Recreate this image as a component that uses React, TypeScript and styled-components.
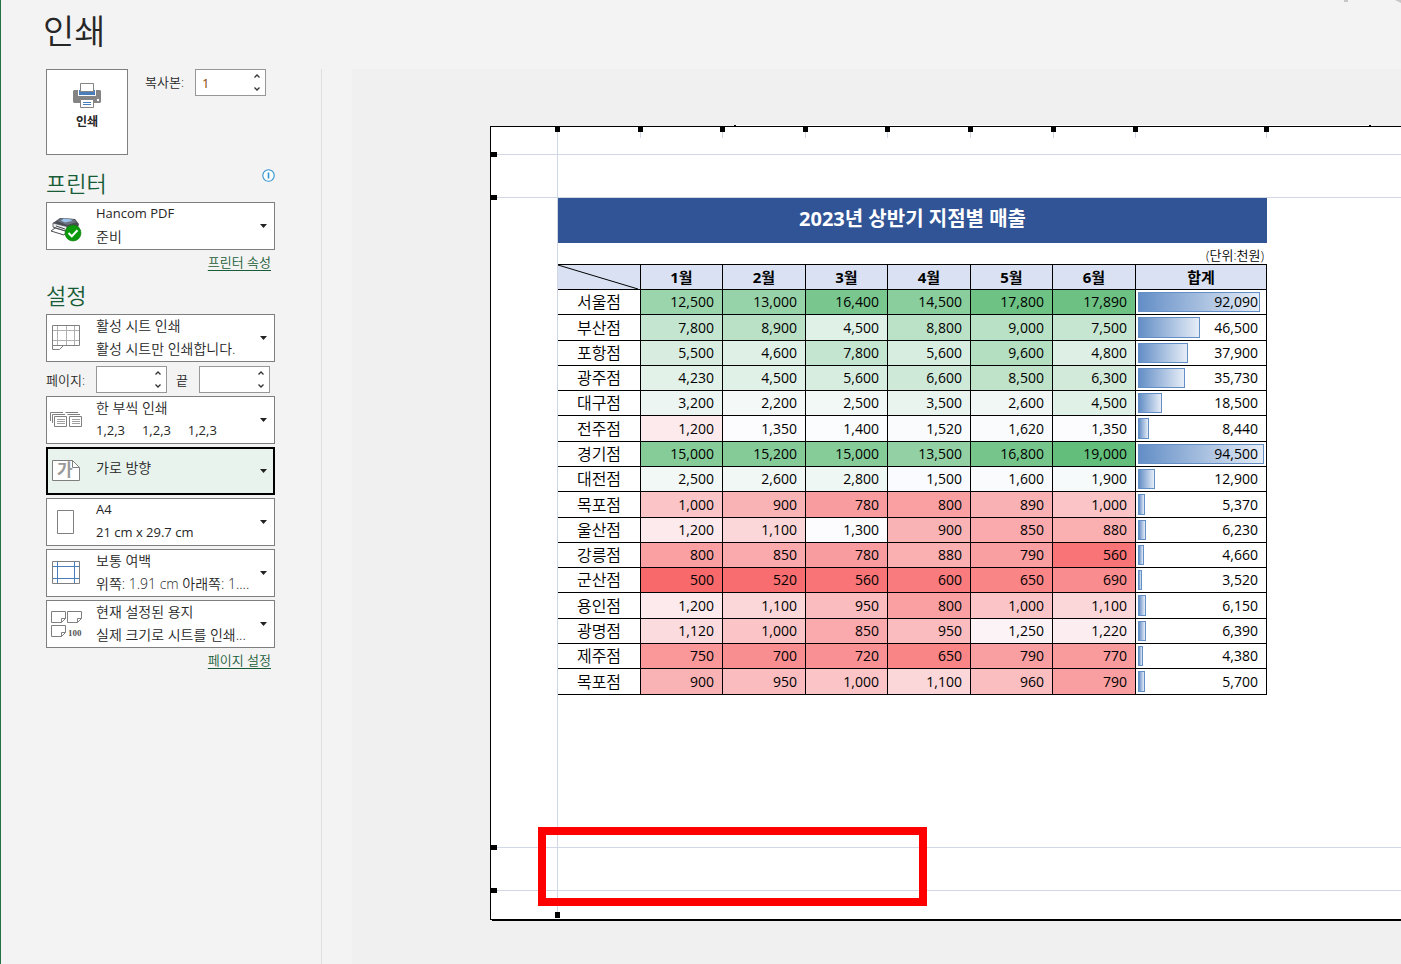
import React from "react";
import styled, { createGlobalStyle } from "styled-components";

const GlobalStyle = createGlobalStyle`
  *, *::before, *::after { box-sizing: border-box; }
  body {
    margin: 0;
    background: #f3f3f3;
    color: #262626;
    font-family: "Open Sans", "Noto Sans CJK KR", sans-serif;
    font-size: 13px;
    font-weight: 400;
  }
  button, input { font: inherit; color: inherit; }
`;

/* ---------- frame ---------- */

const Screen = styled.div`
  position: relative;
  display: flex;
  flex-direction: column;
  min-height: 100vh;
  border-left: 1px solid #217346;
  overflow: hidden;
`;

const Header = styled.header`
  height: 69px;
  padding: 7px 0 0 42px;
`;

const Title = styled.h1`
  margin: 0;
  font-size: 34px;
  font-weight: 350;
  line-height: 48px;
`;

const Corner = styled.svg`
  position: absolute;
  top: 0;
  right: 0;
`;

const Body = styled.div`
  display: flex;
  flex: 1;
`;

const Sidebar = styled.aside`
  flex: none;
  width: 321px;
  padding: 0 46px 24px 45px;
  border-right: 1px solid #dedede;
`;

/* ---------- sidebar ---------- */

const PrintRow = styled.div`
  display: flex;
  align-items: flex-start;
  margin-bottom: 11px;
`;

const PrintButton = styled.button`
  display: flex;
  flex-direction: column;
  align-items: center;
  width: 82px;
  height: 86px;
  padding: 13px 0 0;
  border: 1px solid #7f7f7f;
  background: #fff;
  font-size: 12px;
  font-weight: 700;
  line-height: 26px;
`;

const FieldLabel = styled.label`
  font-weight: 350;
  line-height: 26px;
  white-space: nowrap;
`;

const CopiesLabel = styled(FieldLabel)`
  width: 67px;
  padding-left: 17px;
`;

const SpinBox = styled.span`
  display: flex;
  flex: none;
  width: 71px;
  height: 27px;
  border: 1px solid #979797;
  background: #fff;
`;

const SpinInput = styled.input`
  flex: 1;
  min-width: 0;
  padding: 0 6px;
  border: 0;
  background: transparent;
  color: #8a4500;
  outline: none;
`;

const SpinButtons = styled.span`
  display: flex;
  flex-direction: column;
  width: 17px;
`;

const SpinButton = styled.button`
  display: flex;
  flex: 1;
  align-items: center;
  justify-content: center;
  padding: 0;
  border: 0;
  background: transparent;
`;

const SectionHead = styled.div`
  display: flex;
  justify-content: space-between;
`;

const SectionTitle = styled.h2`
  margin: 0 0 2px;
  color: #185c37;
  font-size: 22px;
  font-weight: 350;
  line-height: 34px;
`;

const InfoButton = styled.button`
  display: flex;
  align-self: flex-start;
  padding: 3px 0 0;
  border: 0;
  background: transparent;
`;

const Stack = styled.div`
  display: flex;
  flex-direction: column;
  gap: 3px;
`;

const Picker = styled.button<{ $active?: boolean }>`
  display: flex;
  align-items: center;
  width: 100%;
  height: 48px;
  padding: 0 7px 0 1px;
  border: 1px solid #7f7f7f;
  background: ${(p) => (p.$active ? "#e9f3ee" : "#fff")};
  box-shadow: ${(p) => (p.$active ? "inset 0 0 0 1px #000" : "none")};
  border-color: ${(p) => (p.$active ? "#000" : "#7f7f7f")};
  text-align: left;
`;

const PickerIcon = styled.svg`
  flex: none;
  margin-right: 12px;
`;

const PickerText = styled.span<{ $single?: boolean }>`
  display: flex;
  flex: 1;
  flex-direction: column;
  min-width: 0;
  padding-bottom: ${(p) => (p.$single ? "8px" : "2px")};
  line-height: 23px;
  white-space: pre;
`;

const Line = styled.span<{ $latin?: boolean }>`
  font-size: ${(p) => (p.$latin ? "13px" : "14px")};
  font-weight: ${(p) => (p.$latin ? 400 : 350)};
`;

const LinkRow = styled.div`
  display: flex;
  justify-content: flex-end;
  padding-right: 4px;
  line-height: 24px;
`;

const PrinterLinkRow = styled(LinkRow)`
  margin-bottom: 4px;
`;

const TextLink = styled.a`
  color: #185c37;
  font-size: 13px;
  font-weight: 350;
  text-decoration: underline;
  text-underline-offset: 3px;
`;

const PagesRow = styled.div`
  display: flex;
  align-items: center;
  padding: 4px 0 3px;
`;

const PagesLabel = styled(FieldLabel)`
  width: 50px;
`;

const ToLabel = styled(FieldLabel)`
  width: 32px;
  padding-left: 9px;
`;

/* ---------- preview ---------- */

const Preview = styled.main`
  flex: 1;
  min-width: 0;
  margin-left: 30px;
  padding: 57px 0 44px 138px;
  background: #f0f0f0;
  overflow: hidden;
`;

const Paper = styled.section`
  position: relative;
  width: 1123px;
  min-height: 794px;
  padding: 71px 0 0 67px;
  border: 1px solid #000;
  background: #fff;
  box-shadow: 2px 1px 0 #000;
`;

const PaperEdge = styled.span`
  position: absolute;
  top: -2px;
  left: 243px;
  width: 637px;
  height: 1px;
  border: solid #000;
  border-width: 0 2px;
  background: #fff;
`;

const RowGuide = styled.span<{ $y: number }>`
  position: absolute;
  top: ${(p) => p.$y}px;
  left: 0;
  right: 0;
  height: 1px;
  background: #d0d7e5;
  &::before {
    content: "";
    position: absolute;
    top: -2px;
    left: 0;
    width: 6px;
    height: 5px;
    background: #000;
  }
`;

const ColumnGuide = styled.span<{ $x: number; $full?: boolean }>`
  position: absolute;
  top: 0;
  bottom: ${(p) => (p.$full ? "1px" : "auto")};
  left: ${(p) => p.$x}px;
  width: 1px;
  height: ${(p) => (p.$full ? "auto" : "11px")};
  background: #d0d7e5;
  &::before, &::after {
    content: "";
    position: absolute;
    left: -2px;
    width: 5px;
    background: #000;
  }
  &::before { top: -1px; height: 6px; }
  &::after { bottom: 0; height: ${(p) => (p.$full ? "6px" : "0")}; }
`;

const Highlight = styled.span`
  position: absolute;
  top: 700px;
  left: 47px;
  width: 389px;
  height: 79px;
  border: 8px solid #f00;
`;

const Report = styled.div`
  position: relative;
  width: 709px;
  color: #000;
`;

const ReportTitle = styled.h3`
  height: 45px;
  margin: 0;
  background: #305496;
  color: #fff;
  font-size: 20px;
  font-weight: 700;
  line-height: 41px;
  text-align: center;
`;

const Unit = styled.p`
  height: 21px;
  margin: 0;
  padding: 2px 3px 0 0;
  font-weight: 350;
  line-height: 21px;
  text-align: right;
`;

const Table = styled.table`
  width: 100%;
  table-layout: fixed;
  border-spacing: 0;
  border-top: 1px solid #000;
  font-size: 14px;
`;

const Col = styled.col<{ $w: number }>`
  width: ${(p) => p.$w}px;
`;

const Row = styled.tr<{ $tall?: boolean }>`
  height: ${(p) => (p.$tall ? "26px" : "25px")};
`;

const Cell = styled.td`
  position: relative;
  padding: 0 8px;
  border: solid #000;
  border-width: 0 1px 1px 0;
  line-height: 22px;
  text-align: right;
`;

const HeadCell = styled(Cell).attrs({ as: "th" })`
  background: #d9e1f2;
  font-size: 15px;
  text-align: center;
`;

const BranchCell = styled(Cell).attrs({ as: "th" })`
  font-size: 16px;
  font-weight: 350;
  text-align: center;
`;

const Diagonal = styled.svg`
  position: absolute;
  top: 0;
  left: 0;
`;

const Bar = styled.span`
  position: absolute;
  top: 2px;
  bottom: 2px;
  left: 2px;
  border: 1px solid #638ec6;
  background: linear-gradient(90deg, #638ec6, #e6edf7);
`;

const Amount = styled.span`
  position: relative;
`;

/* ---------- data ---------- */

const months = ["1월", "2월", "3월", "4월", "5월", "6월"];
const columns = [83, 82, 83, 82, 83, 82, 83, 131];
const guides = [149, 231, 314, 396, 479, 562, 644, 775];

const branches: [string, number[], number][] = [
  ["서울점", [12500, 13000, 16400, 14500, 17800, 17890], 92090],
  ["부산점", [7800, 8900, 4500, 8800, 9000, 7500], 46500],
  ["포항점", [5500, 4600, 7800, 5600, 9600, 4800], 37900],
  ["광주점", [4230, 4500, 5600, 6600, 8500, 6300], 35730],
  ["대구점", [3200, 2200, 2500, 3500, 2600, 4500], 18500],
  ["전주점", [1200, 1350, 1400, 1520, 1620, 1350], 8440],
  ["경기점", [15000, 15200, 15000, 13500, 16800, 19000], 94500],
  ["대전점", [2500, 2600, 2800, 1500, 1600, 1900], 12900],
  ["목포점", [1000, 900, 780, 800, 890, 1000], 5370],
  ["울산점", [1200, 1100, 1300, 900, 850, 880], 6230],
  ["강릉점", [800, 850, 780, 880, 790, 560], 4660],
  ["군산점", [500, 520, 560, 600, 650, 690], 3520],
  ["용인점", [1200, 1100, 950, 800, 1000, 1100], 6150],
  ["광명점", [1120, 1000, 850, 950, 1250, 1220], 6390],
  ["제주점", [750, 700, 720, 650, 790, 770], 4380],
  ["목포점", [900, 950, 1000, 1100, 960, 790], 5700],
];

const tallRows = [1, 5, 8, 12, 15];

// Three-colour scale: red at the minimum, white at the median, green at the maximum.
const LOW = [248, 105, 107];
const MID = [252, 252, 255];
const HIGH = [99, 190, 123];

function scaleColour(value: number): string {
  const [from, to, t] =
    value < 1300
      ? [LOW, MID, (value - 500) / 800]
      : [MID, HIGH, (value - 1300) / 17700];
  const mix = from.map((c, i) => Math.round(c + (to[i] - c) * t));
  return `rgb(${mix.join(",")})`;
}

const format = (n: number) => n.toLocaleString("en-US");

/* ---------- icons ---------- */

const PrintIcon = () => (
  <svg width="28" height="26" viewBox="0 0 28 26" aria-hidden="true">
    <path d="M1 7h26l1 1v11l-1 1H1l-1-1V8z" fill="#848484" />
    <path d="M5 7h18v6H5z" fill="#fff" />
    <path d="M6 7h16v5H6z" fill="#4a7ebb" />
    <path d="M7.500.5h13v8h-13z" fill="#fff" stroke="#848484" />
    <path d="M7.500 16.500h13v8h-13z" fill="#fff" stroke="#848484" />
    <path d="M10 19.500h8M10 21.500h8" stroke="#4a7ebb" />
    <circle cx="25" cy="17" r="1.200" fill="#fff" />
  </svg>
);

const InfoIcon = () => (
  <svg width="13" height="13" viewBox="0 0 13 13" aria-hidden="true">
    <circle cx="6.500" cy="6.500" r="5.700" fill="#fff" stroke="#2e93cf" strokeWidth="1.100" />
    <path d="M5.700 3.500h1.600v6H5.700z" fill="#2e93cf" />
  </svg>
);

const Chevron = ({ up }: { up?: boolean }) => (
  <svg width="6" height="4" viewBox="0 0 6 4" aria-hidden="true">
    <path d={up ? "M.5 3.500L3 1l2.500 2.500" : "M.5.5L3 3 5.500.5"} fill="none" stroke="#333" strokeWidth="1.300" />
  </svg>
);

const Caret = () => (
  <svg width="7" height="4" viewBox="0 0 7 4" aria-hidden="true">
    <path d="M0 0h7L3.500 4z" fill="#222" />
  </svg>
);

const PrinterDevice = () => (
  <>
    <path d="M5 20l7-5 15 1 4 5-2 8-9 2-14-5z" fill="#4a4d55" />
    <path d="M9 18l5-3 11 1 4 3-10 3z" fill="#6b7280" />
    <path d="M13 17.500l3-2 7 1 1 1.500-7 1.500z" fill="#9cc3ea" />
    <path d="M5 20l14 3.500v5L5 24z" fill="#e9ebee" stroke="#4a4d52" strokeWidth=".8" />
    <path d="M8 23l9 3" stroke="#4a4d52" />
    <path d="M3 28l4-3 12 3.500-3 3.500z" fill="#fff" stroke="#4a4d52" />
    <circle cx="25" cy="30" r="8" fill="#0c9a0c" stroke="#087808" strokeWidth=".6" />
    <path d="M20.500 30l3.300 3.300 5.700-6" fill="none" stroke="#fff" strokeWidth="2" />
  </>
);

const SheetGrid = () => (
  <>
    <path d="M4.500 10.500h27v20h-27zM4.500 30.500v4h7l4-4" fill="#fff" stroke="#7f7f7f" />
    <path d="M9.500 11v19M18.500 11v19M26.500 11v19M5 15.500h26M5 25.500h26" stroke="#b0b0b0" />
  </>
);

const Collated = () => (
  <>
    <path d="M2.500 24v-8.500H15M4.500 26v-8.500H17M17.500 15.500H30M19.500 17.500H32" fill="none" stroke="#7f7f7f" />
    <path d="M6.500 19.500h12v10h-12zM21.500 19.500h12v10h-12z" fill="#fff" stroke="#7f7f7f" />
    <path d="M9 22.500h8M9 24.500h8M9 26.500h8M24 22.500h8M24 24.500h8M24 26.500h8" stroke="#a0a0a0" />
  </>
);

const Landscape = () => (
  <>
    <path d="M4.500 12.500h20l7 7v13h-27z" fill="#fff" stroke="#7f7f7f" />
    <path d="M24.500 12.500v7h7" fill="none" stroke="#7f7f7f" />
    <text x="9" y="28" fontSize="17" fontWeight="700" fill="#9a9a9a">가</text>
  </>
);

const PaperSize = () => <path d="M9.500 11.500h16v23h-16z" fill="#fff" stroke="#7f7f7f" />;

const Margins = () => (
  <>
    <path d="M4.500 11.500h27v22h-27z" fill="#fff" stroke="#7f7f7f" />
    <path d="M9.500 12v21M26.500 12v21M5 16.500h26M5 28.500h26" stroke="#4a7ebb" />
  </>
);

const Scaling = () => (
  <>
    {["translate(3 10)", "translate(19 10)", "translate(3 24)"].map((t) => (
      <path key={t} transform={t} d="M.5.5h14v7l-4 4H.5zM10.500 11.500v-4h4" fill="#fff" stroke="#7f7f7f" />
    ))}
    <text x="20" y="35" fontSize="9" fontWeight="700" fill="#555" fontFamily="Liberation Serif, serif">100</text>
  </>
);

/* ---------- parts ---------- */

function Spin({ id, value = "", name }: { id: string; value?: string; name: string }) {
  return (
    <SpinBox>
      <SpinInput id={id} type="text" inputMode="numeric" defaultValue={value} />
      <SpinButtons>
        <SpinButton type="button" aria-label={`${name} 늘리기`}><Chevron up /></SpinButton>
        <SpinButton type="button" aria-label={`${name} 줄이기`}><Chevron /></SpinButton>
      </SpinButtons>
    </SpinBox>
  );
}

type OptionProps = {
  icon: React.ReactNode;
  lines: string[];
  active?: boolean;
};

function Option({ icon, lines, active }: OptionProps) {
  return (
    <Picker type="button" aria-haspopup="listbox" $active={active}>
      <PickerIcon width="36" height="46" viewBox="0 0 36 46" aria-hidden="true">{icon}</PickerIcon>
      <PickerText $single={lines.length === 1}>
        {lines.map((line) => (
          <Line key={line} $latin={!/[가-힣]/.test(line)}>{line}</Line>
        ))}
      </PickerText>
      <Caret />
    </Picker>
  );
}

function SalesTable() {
  return (
    <Table>
      <colgroup>
        {columns.map((w, i) => <Col key={i} $w={w} />)}
      </colgroup>
      <thead>
        <Row>
          <HeadCell aria-label="지점">
            <Diagonal width="82" height="24" viewBox="0 0 82 24" aria-hidden="true">
              <path d="M0 0l80 24" stroke="#000" />
            </Diagonal>
          </HeadCell>
          {months.map((m) => <HeadCell key={m} scope="col">{m}</HeadCell>)}
          <HeadCell scope="col">합계</HeadCell>
        </Row>
      </thead>
      <tbody>
        {branches.map(([name, values, total], i) => (
          <Row key={i} $tall={tallRows.includes(i)}>
            <BranchCell scope="row">{name}</BranchCell>
            {values.map((v, j) => (
              <Cell key={j} style={{ background: scaleColour(v) }}>{format(v)}</Cell>
            ))}
            <Cell>
              <Bar style={{ width: Math.floor((total / 94500) * 126) }} />
              <Amount>{format(total)}</Amount>
            </Cell>
          </Row>
        ))}
      </tbody>
    </Table>
  );
}

export default function App() {
  return (
    <Screen>
      <GlobalStyle />
      <Corner width="60" height="4" viewBox="0 0 60 4" aria-hidden="true">
        <path d="M3 0h4v2H3zM54 0h6v3z" fill="#c6c6c6" />
      </Corner>
      <Header>
        <Title>인쇄</Title>
      </Header>
      <Body>
        <Sidebar>
          <PrintRow>
            <PrintButton type="button">
              <PrintIcon />
              인쇄
            </PrintButton>
            <CopiesLabel htmlFor="copies">복사본:</CopiesLabel>
            <Spin id="copies" value="1" name="복사본" />
          </PrintRow>

          <SectionHead>
            <SectionTitle>프린터</SectionTitle>
            <InfoButton type="button" aria-label="프린터 정보"><InfoIcon /></InfoButton>
          </SectionHead>
          <Option icon={<PrinterDevice />} lines={["Hancom PDF", "준비"]} />
          <PrinterLinkRow><TextLink href="#printer">프린터 속성</TextLink></PrinterLinkRow>

          <SectionTitle>설정</SectionTitle>
          <Option icon={<SheetGrid />} lines={["활성 시트 인쇄", "활성 시트만 인쇄합니다."]} />
          <PagesRow>
            <PagesLabel htmlFor="from">페이지:</PagesLabel>
            <Spin id="from" name="시작 페이지" />
            <ToLabel htmlFor="to">끝</ToLabel>
            <Spin id="to" name="끝 페이지" />
          </PagesRow>
          <Stack>
            <Option icon={<Collated />} lines={["한 부씩 인쇄", "1,2,3     1,2,3     1,2,3"]} />
            <Option icon={<Landscape />} lines={["가로 방향"]} active />
            <Option icon={<PaperSize />} lines={["A4", "21 cm x 29.7 cm"]} />
            <Option icon={<Margins />} lines={["보통 여백", "위쪽: 1.91 cm 아래쪽: 1...."]} />
            <Option icon={<Scaling />} lines={["현재 설정된 용지", "실제 크기로 시트를 인쇄..."]} />
          </Stack>
          <LinkRow><TextLink href="#page">페이지 설정</TextLink></LinkRow>
        </Sidebar>

        <Preview>
          <Paper>
            <PaperEdge />
            <ColumnGuide $x={66} $full />
            {guides.map((x) => <ColumnGuide key={x} $x={x} />)}
            {[27, 70, 720, 763].map((y) => <RowGuide key={y} $y={y} />)}
            <Report>
              <ReportTitle>2023년 상반기 지점별 매출</ReportTitle>
              <Unit>(단위:천원)</Unit>
              <SalesTable />
            </Report>
            <Highlight />
          </Paper>
        </Preview>
      </Body>
    </Screen>
  );
}
